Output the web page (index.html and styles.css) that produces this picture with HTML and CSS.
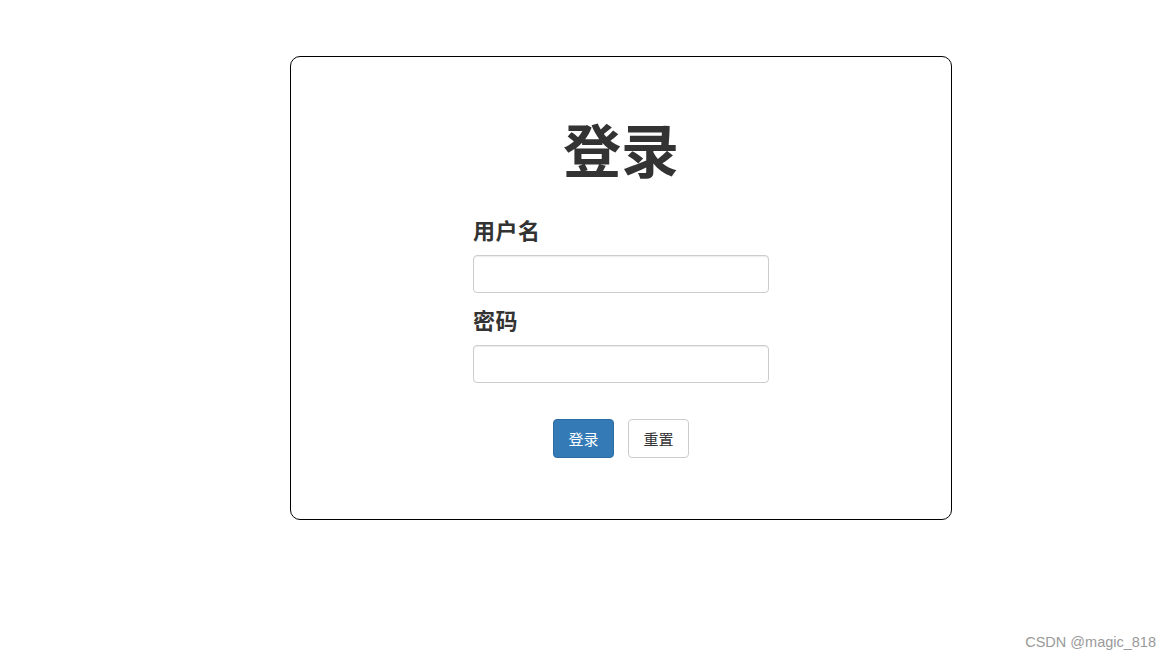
FILE: index.html
```html
<!DOCTYPE html>
<html lang="zh">
<head>
<meta charset="utf-8">
<title>登录</title>
<link rel="stylesheet" href="styles.css">
</head>
<body>
<div class="card">
  <h1 class="title">登录</h1>
  <form class="form">
    <label class="label" for="u">用户名</label>
    <input class="input" id="u" type="text">
    <label class="label label-second" for="p">密码</label>
    <input class="input" id="p" type="password">
    <div class="actions">
      <button type="button" class="btn btn-primary">登录</button>
      <button type="reset" class="btn btn-default">重置</button>
    </div>
  </form>
</div>
<div class="watermark">CSDN @magic_818</div>
</body>
</html>
```
FILE: styles.css
```css
html, body {
  margin: 0;
  padding: 0;
  background: #fff;
}
body {
  font-family: "Noto Sans CJK SC", "Liberation Sans", sans-serif;
  color: #333;
  height: 659px;
  position: relative;
  overflow: hidden;
}
.card {
  box-sizing: border-box;
  margin: 56px 0 0 290px;
  width: 662px;
  height: 464px;
  border: 1px solid #000;
  border-radius: 10px;
  padding-top: 59px;
  display: flex;
  flex-direction: column;
  align-items: center;
}
.title {
  margin: 0;
  font-size: 58px;
  line-height: 64px;
  font-weight: 700;
  color: #333;
}
.form {
  width: 296px;
  display: flex;
  flex-direction: column;
  margin-top: 34px;
}
.label {
  font-size: 22px;
  letter-spacing: 0.5px;
  font-weight: 700;
  line-height: 30px;
  margin-bottom: 11px;
}
.label-second {
  margin-top: 11px;
}
.input {
  box-sizing: border-box;
  height: 38px;
  width: 100%;
  border: 1px solid #ccc;
  border-radius: 4px;
  box-shadow: inset 0 1px 1px rgba(0,0,0,.075);
  padding: 6px 12px;
  margin: 0;
  font-size: 14px;
}
.actions {
  display: flex;
  justify-content: center;
  gap: 14px;
  margin-top: 36px;
}
.btn {
  box-sizing: border-box;
  height: 39px;
  width: 61px;
  padding: 0;
  border-radius: 4px;
  font-family: "Noto Sans CJK SC", sans-serif;
  font-size: 15px;
  line-height: 37px;
  cursor: pointer;
}
.btn-primary {
  background: #337ab7;
  border: 1px solid #2e6da4;
  color: #fff;
}
.btn-default {
  background: #fff;
  border: 1px solid #ccc;
  color: #333;
}
.watermark {
  position: absolute;
  right: 15px;
  bottom: 9px;
  font-family: "Liberation Sans", sans-serif;
  font-size: 14.5px;
  color: #999;
}
```
